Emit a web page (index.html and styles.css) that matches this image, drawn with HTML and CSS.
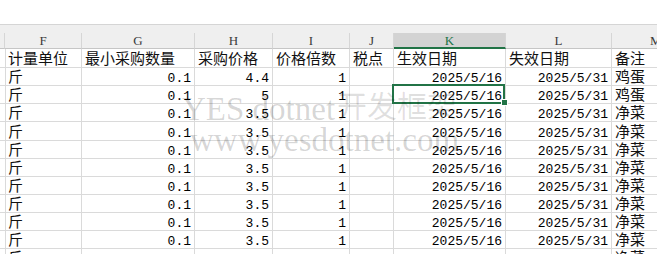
FILE: index.html
```html
<!DOCTYPE html>
<html lang="zh-CN">
<head>
<meta charset="utf-8">
<title>Sheet</title>
<link rel="stylesheet" href="styles.css">
</head>
<body>
<div class="top"></div>
<div class="strip"></div>
<div class="sheet">
  <div class="ch"></div>
  <div class="ch">F</div>
  <div class="ch">G</div>
  <div class="ch">H</div>
  <div class="ch">I</div>
  <div class="ch">J</div>
  <div class="ch sel">K</div>
  <div class="ch">L</div>
  <div class="ch left">M</div>

  <div class="c"></div>
  <div class="c">计量单位</div>
  <div class="c">最小采购数量</div>
  <div class="c">采购价格</div>
  <div class="c">价格倍数</div>
  <div class="c">税点</div>
  <div class="c">生效日期</div>
  <div class="c">失效日期</div>
  <div class="c">备注</div>

  <div class="c"></div><div class="c">斤</div><div class="c n">0.1</div><div class="c n">4.4</div><div class="c n">1</div><div class="c"></div><div class="c n">2025/5/16</div><div class="c n">2025/5/31</div><div class="c">鸡蛋</div>
  <div class="c"></div><div class="c">斤</div><div class="c n">0.1</div><div class="c n">5</div><div class="c n">1</div><div class="c"></div><div class="c n cur">2025/5/16<span class="handle"></span></div><div class="c n">2025/5/31</div><div class="c">鸡蛋</div>
  <div class="c"></div><div class="c">斤</div><div class="c n">0.1</div><div class="c n">3.5</div><div class="c n">1</div><div class="c"></div><div class="c n">2025/5/16</div><div class="c n">2025/5/31</div><div class="c">净菜</div>
  <div class="c"></div><div class="c">斤</div><div class="c n">0.1</div><div class="c n">3.5</div><div class="c n">1</div><div class="c"></div><div class="c n">2025/5/16</div><div class="c n">2025/5/31</div><div class="c">净菜</div>
  <div class="c"></div><div class="c">斤</div><div class="c n">0.1</div><div class="c n">3.5</div><div class="c n">1</div><div class="c"></div><div class="c n">2025/5/16</div><div class="c n">2025/5/31</div><div class="c">净菜</div>
  <div class="c"></div><div class="c">斤</div><div class="c n">0.1</div><div class="c n">3.5</div><div class="c n">1</div><div class="c"></div><div class="c n">2025/5/16</div><div class="c n">2025/5/31</div><div class="c">净菜</div>
  <div class="c"></div><div class="c">斤</div><div class="c n">0.1</div><div class="c n">3.5</div><div class="c n">1</div><div class="c"></div><div class="c n">2025/5/16</div><div class="c n">2025/5/31</div><div class="c">净菜</div>
  <div class="c"></div><div class="c">斤</div><div class="c n">0.1</div><div class="c n">3.5</div><div class="c n">1</div><div class="c"></div><div class="c n">2025/5/16</div><div class="c n">2025/5/31</div><div class="c">净菜</div>
  <div class="c"></div><div class="c">斤</div><div class="c n">0.1</div><div class="c n">3.5</div><div class="c n">1</div><div class="c"></div><div class="c n">2025/5/16</div><div class="c n">2025/5/31</div><div class="c">净菜</div>
  <div class="c"></div><div class="c">斤</div><div class="c n">0.1</div><div class="c n">3.5</div><div class="c n">1</div><div class="c"></div><div class="c n">2025/5/16</div><div class="c n">2025/5/31</div><div class="c">净菜</div>
  <div class="c"></div><div class="c">斤</div><div class="c n">0.1</div><div class="c n">3.5</div><div class="c n">1</div><div class="c"></div><div class="c n">2025/5/16</div><div class="c n">2025/5/31</div><div class="c">净菜</div>
</div>
<div class="wm wm1">YES dotnet<span class="zh">开发框架</span></div>
<div class="wm wm2">www.yesdotnet.com</div>
</body>
</html>
```
FILE: styles.css
```css
html, body {
  margin: 0;
  padding: 0;
}
body {
  width: 657px;
  height: 254px;
  overflow: hidden;
  background: #ffffff;
  position: relative;
}
.top {
  height: 24px;
  border-bottom: 1px solid #d5d5d5;
  background: #ffffff;
}
.strip {
  height: 8px;
  background: #efefef;
}
.sheet {
  display: grid;
  grid-template-columns: 5px 77px 113px 78px 77px 44px 112px 106px 60px;
  grid-template-rows: 16px 19px;
  grid-auto-rows: 18.13px;
  height: 222px;
  overflow: hidden;
}
.ch {
  box-sizing: border-box;
  background: #efefef;
  border-right: 1px solid #d6d6d6;
  border-bottom: 1px solid #c6c6c6;
  display: flex;
  align-items: flex-end;
  justify-content: center;
  font-family: "Liberation Serif", serif;
  font-size: 13px;
  line-height: 1;
  color: #3a3a3a;
  white-space: nowrap;
  padding-bottom: 1px;
}
.ch.sel {
  background: #d3d3d3;
  color: #217346;
  border-bottom: 2px solid #217346;
  padding-bottom: 0;
}
.ch.left {
  justify-content: flex-start;
  padding-left: 38px;
}
.c {
  box-sizing: border-box;
  border-right: 1px solid #dadada;
  border-bottom: 1px solid #dadada;
  display: flex;
  align-items: flex-end;
  white-space: nowrap;
  font-family: "Noto Sans CJK SC", sans-serif;
  font-size: 15px;
  line-height: 1;
  color: #111111;
  padding: 0 2px 2px 3px;
}
.c.n {
  justify-content: flex-end;
  font-family: "Liberation Mono", monospace;
  font-size: 13px;
  color: #000000;
  padding: 0 3px 0 3px;
}
.c.cur {
  position: relative;
}
.c.cur::after {
  content: "";
  position: absolute;
  left: -2px;
  top: -2px;
  right: 0;
  bottom: -1px;
  border: 2px solid #217346;
}
.handle {
  position: absolute;
  right: -2px;
  bottom: -2px;
  width: 5px;
  height: 5px;
  background: #217346;
  box-shadow: 0 0 0 1px #ffffff;
  z-index: 2;
}
.wm {
  position: absolute;
  font-family: "Liberation Serif", serif;
  font-size: 33px;
  line-height: 1;
  color: rgba(0, 0, 0, 0.17);
  white-space: nowrap;
  pointer-events: none;
}
.wm1 {
  left: 182px;
  top: 89px;
}
.wm2 {
  left: 190px;
  top: 124px;
}
.zh {
  font-family: "Noto Sans CJK SC", sans-serif;
  font-size: 30px;
  color: rgba(0, 0, 0, 0.12);
  vertical-align: 3px;
  margin-left: 2px;
}
```
